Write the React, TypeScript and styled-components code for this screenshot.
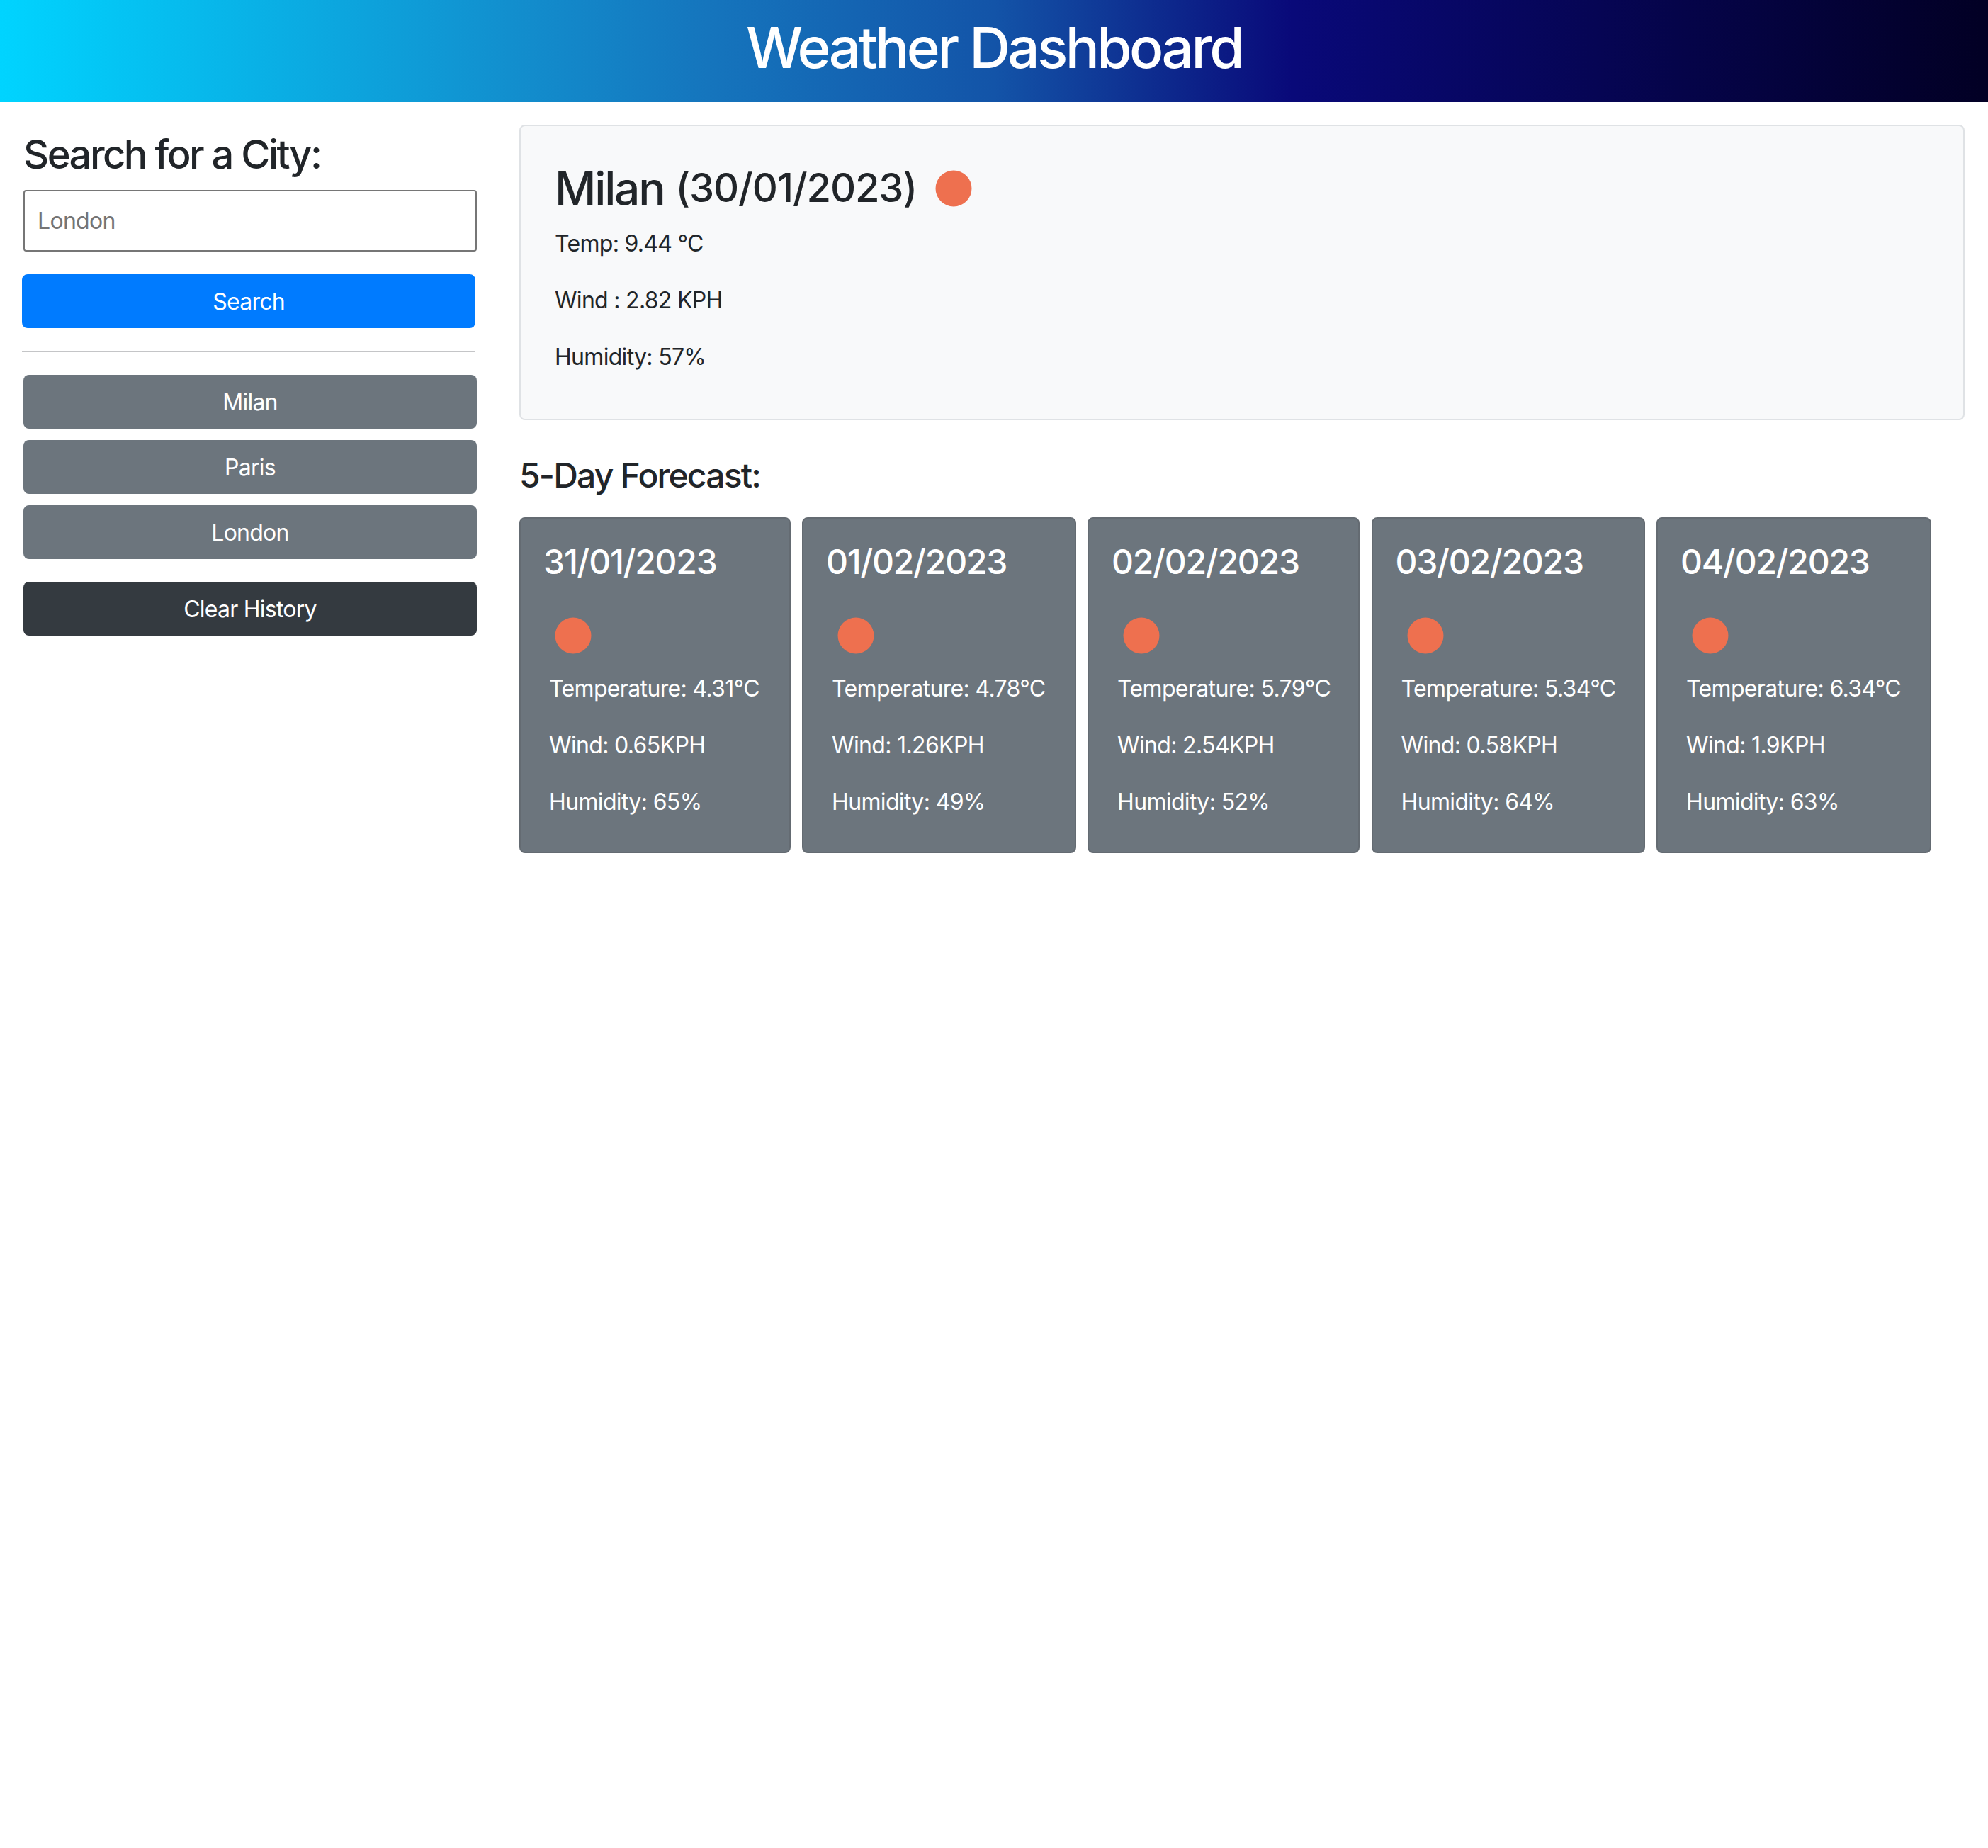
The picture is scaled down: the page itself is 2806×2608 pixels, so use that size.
import React from "react";
import styled, { createGlobalStyle } from "styled-components";

const Global = createGlobalStyle`
  * { box-sizing: border-box; }
  html, body { margin: 0; padding: 0; background: #fff; }
  body { font-family: Inter, "Liberation Sans", sans-serif; font-size: 32px; line-height: 48px; color: #212529; }
`;

const Header = styled.header`
  height: 144px;
  padding-bottom: 10px;
  display: flex;
  align-items: center;
  justify-content: center;
  background: linear-gradient(90deg, #00d4ff 0%, #128fce 25.6%, #1575bd 35.6%, #1354a8 50%, #090979 65%, #020024 100%);
`;
const Title = styled.h1`
  margin: 0;
  font-size: 80px;
  line-height: 96px;
  font-weight: 550;
  color: #fff;
  letter-spacing: -3.6px;
`;
const Page = styled.div`
  display: flex;
  align-items: flex-start;
  padding: 32px 33px 0 31px;
  gap: 60px;
`;
const Sidebar = styled.aside`
  width: 642px;
  flex: none;
  display: flex;
  flex-direction: column;
`;
const SideTitle = styled.h3`
  margin: 13px 0 21px 2px;
  font-size: 56px;
  line-height: 58px;
  font-weight: 550;
  letter-spacing: -2.5px;
`;
const CityInput = styled.input`
  width: 640px;
  height: 87px;
  margin: 0 0 32px 2px;
  padding: 0 18px;
  border: 2px solid #767676;
  border-radius: 4px;
  background: #fff;
  font: 400 32px Inter, "Liberation Sans", sans-serif;
  letter-spacing: -0.7px;
  &::placeholder { color: #757575; opacity: 1; }
`;
const Button = styled.button<{ $tone: string; $inset?: boolean }>`
  display: block;
  width: 640px;
  height: 76px;
  margin-left: ${(p) => (p.$inset ? "2px" : "0")};
  padding: 2px 0 0;
  border: 0;
  border-radius: 8px;
  background: ${(p) => p.$tone};
  color: #fff;
  font: 400 32px/48px Inter, "Liberation Sans", sans-serif;
  letter-spacing: -0.75px;
`;
const Rule = styled.hr`
  width: 640px;
  margin: 32px 0;
  border: 0;
  border-top: 2px solid #c4c5c7;
`;
const History = styled.div`
  display: flex;
  flex-direction: column;
  gap: 16px;
  margin-bottom: 32px;
`;
const Main = styled.main`
  flex: 1;
  min-width: 0;
`;
const Current = styled.section`
  height: 417px;
  padding: 49px 48px 0 48px;
  border: 2px solid #dfe2e5;
  border-radius: 8px;
  background: #f8f9fa;
`;
const CityHeading = styled.h2`
  display: flex;
  align-items: center;
  margin: 0 0 16px;
  font-size: 64px;
  line-height: 77px;
  font-weight: 550;
  letter-spacing: -2.2px;
`;
const DateText = styled.span`
  margin-left: 16px;
  font-size: 56px;
  font-weight: 450;
  letter-spacing: -1.1px;
`;
const Line = styled.p`
  margin: 0 0 32px;
  font-size: 32px;
  line-height: 48px;
  letter-spacing: -0.7px;
`;
const ForecastTitle = styled.h4`
  margin: 49px 0 30px;
  font-size: 48px;
  line-height: 58px;
  font-weight: 550;
  letter-spacing: -1.8px;
`;
const Cards = styled.div`
  display: flex;
  gap: 16.5px;
`;
const Card = styled.article<{ $w: number }>`
  width: ${(p) => p.$w}px;
  height: 474px;
  flex: none;
  padding: 0 32px;
  border: 2px solid #646b72;
  border-radius: 8px;
  background: #6c757d;
  color: #fff;
`;
const CardDate = styled.h3`
  margin: 32px 0 49px;
  font-size: 48px;
  line-height: 58px;
  font-weight: 500;
  letter-spacing: -1.2px;
`;
const CardLine = styled.p`
  margin: 0 0 32px 8px;
  font-size: 32px;
  line-height: 48px;
  letter-spacing: -0.65px;
  white-space: nowrap;
`;
const SunIcon = styled.svg<{ $card?: boolean }>`
  display: block;
  flex: none;
  width: 52px;
  height: 52px;
  filter: blur(0.5px);
  margin: ${(p) => (p.$card ? "0 0 25px 16px" : "0 0 0 26px")};
`;

const Sun = ({ card }: { card?: boolean }) => (
  <SunIcon $card={card} viewBox="0 0 52 52" aria-hidden="true">
    <circle cx="26" cy="26" r="25.5" fill="#ee704f" />
  </SunIcon>
);

const forecast = [
  { w: 382.5, d: "31/01/2023", t: "4.31", v: "0.65", h: "65" },
  { w: 386.5, d: "01/02/2023", t: "4.78", v: "1.26", h: "49" },
  { w: 384, d: "02/02/2023", t: "5.79", v: "2.54", h: "52" },
  { w: 386, d: "03/02/2023", t: "5.34", v: "0.58", h: "64" },
  { w: 387.5, d: "04/02/2023", t: "6.34", v: "1.9", h: "63" },
];

export default function App() {
  return (
    <>
      <Global />
      <Header>
        <Title>Weather Dashboard</Title>
      </Header>
      <Page>
        <Sidebar>
          <SideTitle>Search for a City:</SideTitle>
          <CityInput placeholder="London" />
          <Button $tone="#007bff">Search</Button>
          <Rule />
          <History>
            <Button $inset $tone="#6c757d">Milan</Button>
            <Button $inset $tone="#6c757d">Paris</Button>
            <Button $inset $tone="#6c757d">London</Button>
          </History>
          <Button $inset $tone="#343a40">Clear History</Button>
        </Sidebar>
        <Main>
          <Current>
            <CityHeading>
              Milan <DateText>(30/01/2023)</DateText>
              <Sun />
            </CityHeading>
            <Line>Temp: 9.44 °C</Line>
            <Line>Wind : 2.82 KPH</Line>
            <Line>Humidity: 57%</Line>
          </Current>
          <ForecastTitle>5-Day Forecast:</ForecastTitle>
          <Cards>
            {forecast.map((f) => (
              <Card key={f.d} $w={f.w}>
                <CardDate>{f.d}</CardDate>
                <Sun card />
                <CardLine>Temperature: {f.t}°C</CardLine>
                <CardLine>Wind: {f.v}KPH</CardLine>
                <CardLine>Humidity: {f.h}%</CardLine>
              </Card>
            ))}
          </Cards>
        </Main>
      </Page>
    </>
  );
}
